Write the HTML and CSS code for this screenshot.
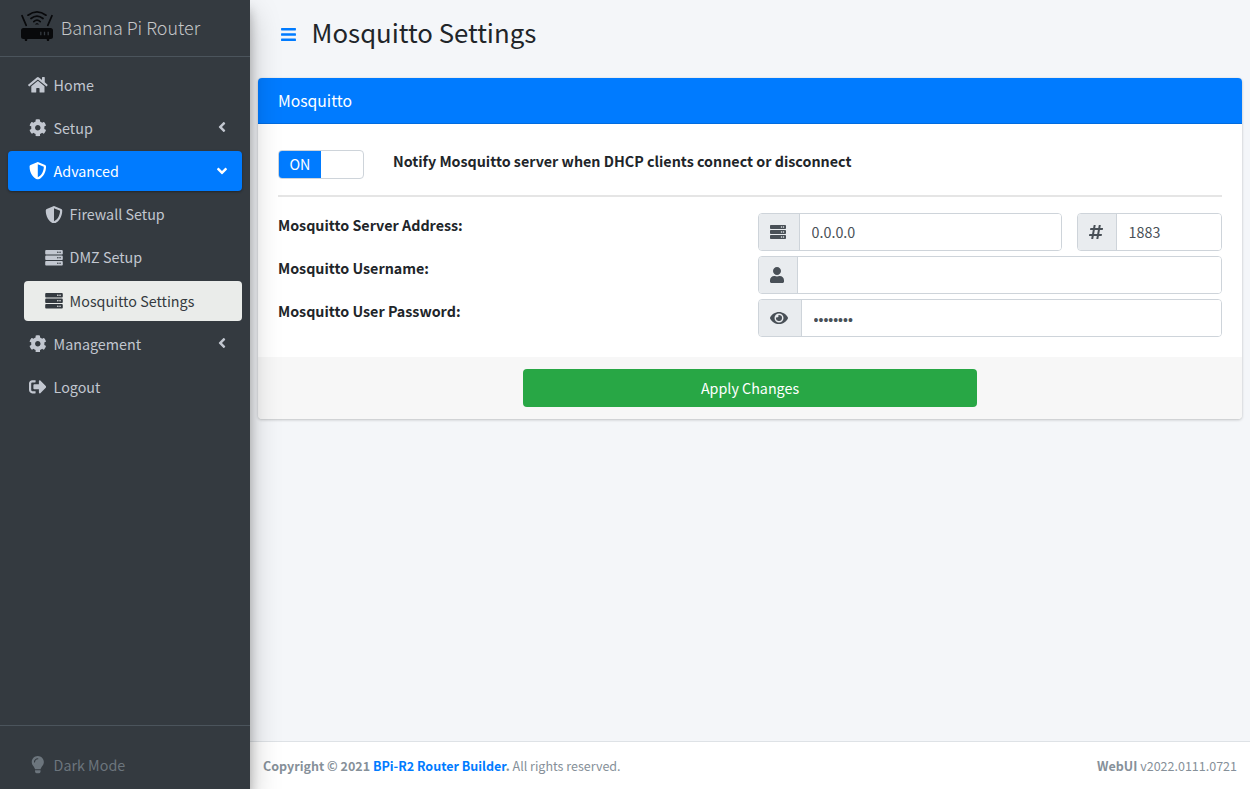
FILE: index.html
```html
<!DOCTYPE html>
<html lang="en">
<head>
<meta charset="utf-8">
<title>Mosquitto Settings</title>
<link rel="stylesheet" href="styles.css">
</head>
<body>
<svg class="defs" width="0" height="0">
  <symbol id="home" viewBox="0 0 576 512"><path d="M280.37 148.26L96 300.11V464a16 16 0 0 0 16 16l112.06-.29a16 16 0 0 0 15.92-16V368a16 16 0 0 1 16-16h64a16 16 0 0 1 16 16v95.64a16 16 0 0 0 16 16.05L464 480a16 16 0 0 0 16-16V300L295.67 148.26a12.19 12.19 0 0 0-15.3 0zM571.6 251.47L488 182.56V44.05a12 12 0 0 0-12-12h-56a12 12 0 0 0-12 12v72.61L318.47 43a48 48 0 0 0-61 0L4.34 251.47a12 12 0 0 0-1.6 16.9l25.5 31A12 12 0 0 0 45.15 301l235.22-193.74a12.19 12.19 0 0 1 15.3 0L530.9 301a12 12 0 0 0 16.9-1.6l25.5-31a12 12 0 0 0-1.7-16.93z"/></symbol>
  <symbol id="cog" viewBox="0 0 512 512"><path d="M487.4 315.7l-42.6-24.6c4.3-23.2 4.3-47 0-70.2l42.6-24.6c4.9-2.8 7.1-8.6 5.5-14-11.1-35.6-30-67.8-54.7-94.6-3.8-4.1-10-5.1-14.8-2.3L380.8 110c-17.9-15.4-38.5-27.3-60.8-35.1V25.8c0-5.6-3.9-10.5-9.4-11.7-36.7-8.2-74.3-7.8-109.2 0-5.5 1.2-9.4 6.1-9.4 11.7V75c-22.2 7.9-42.8 19.8-60.8 35.1L88.7 85.5c-4.9-2.8-11-1.9-14.8 2.3-24.7 26.7-43.6 58.9-54.7 94.6-1.7 5.4.6 11.2 5.5 14L67.3 221c-4.3 23.2-4.3 47 0 70.2l-42.6 24.6c-4.9 2.8-7.1 8.6-5.5 14 11.1 35.6 30 67.8 54.7 94.6 3.8 4.1 10 5.1 14.8 2.3l42.6-24.6c17.9 15.4 38.5 27.3 60.8 35.1v49.2c0 5.6 3.9 10.5 9.4 11.7 36.7 8.2 74.3 7.8 109.2 0 5.5-1.2 9.4-6.1 9.4-11.7v-49.2c22.2-7.9 42.8-19.8 60.8-35.1l42.6 24.6c4.9 2.8 11 1.9 14.8-2.3 24.7-26.7 43.6-58.9 54.7-94.6 1.5-5.5-.7-11.3-5.6-14.1zM256 336c-44.1 0-80-35.9-80-80s35.9-80 80-80 80 35.9 80 80-35.9 80-80 80z"/></symbol>
  <symbol id="shield" viewBox="0 0 512 512"><path d="M466.5 83.7l-192-80a48.15 48.15 0 0 0-36.9 0l-192 80C27.7 91.1 16 108.6 16 128c0 198.5 114.5 335.7 221.5 380.3 11.8 4.9 25.1 4.9 36.9 0C360.1 472.6 496 349.3 496 128c0-19.4-11.7-36.9-29.5-44.3zM256.1 446.3l-.1-381 175.9 73.3c-3.3 151.4-82.1 261.1-175.8 307.7z"/></symbol>
  <symbol id="server" viewBox="0 0 512 512"><path id="unit" d="M480 160H32c-17.673 0-32-14.327-32-32V64c0-17.673 14.327-32 32-32h448c17.673 0 32 14.327 32 32v64c0 17.673-14.327 32-32 32zm-48-88c-13.255 0-24 10.745-24 24s10.745 24 24 24 24-10.745 24-24-10.745-24-24-24zm-64 0c-13.255 0-24 10.745-24 24s10.745 24 24 24 24-10.745 24-24-10.745-24-24-24z"/><use href="#unit" y="160"/><use href="#unit" y="320"/></symbol>
  <symbol id="logout" viewBox="0 0 512 512"><path d="M497 273L329 441c-15 15-41 4.500-41-17v-96H152c-13.300 0-24-10.700-24-24v-96c0-13.300 10.700-24 24-24h136V88c0-21.400 25.900-32 41-17l168 168c9.300 9.400 9.300 24.600 0 34zM192 436v-40c0-6.600-5.400-12-12-12H96c-17.700 0-32-14.300-32-32V160c0-17.700 14.300-32 32-32h84c6.600 0 12-5.400 12-12V76c0-6.600-5.400-12-12-12H96c-53 0-96 43-96 96v192c0 53 43 96 96 96h84c6.600 0 12-5.400 12-12z"/></symbol>
  <symbol id="bulb" viewBox="0 0 352 512"><path d="M96.060 454.350c.01 6.290 1.870 12.450 5.360 17.690l17.090 25.690a31.990 31.990 0 0 0 26.640 14.280h61.710a31.990 31.990 0 0 0 26.640-14.280l17.090-25.690a31.990 31.990 0 0 0 5.360-17.690l.04-38.350H96.010l.05 38.350zM0 176c0 44.370 16.450 84.850 43.560 115.780 16.520 18.850 42.360 58.230 52.210 91.450.04.260.07.520.11.780h160.240c.04-.26.07-.51.11-.78 9.850-33.220 35.690-72.600 52.210-91.450C335.550 260.850 352 220.370 352 176 352 78.610 272.910-.3 175.450 0 73.440.31 0 82.970 0 176zm176-80c-44.110 0-80 35.890-80 80 0 8.840-7.160 16-16 16s-16-7.160-16-16c0-61.760 50.240-112 112-112 8.840 0 16 7.160 16 16s-7.160 16-16 16z"/></symbol>
  <symbol id="angle-left" viewBox="0 0 256 512"><path d="M31.700 239l136-136c9.400-9.400 24.600-9.400 33.900 0l22.600 22.600c9.400 9.400 9.400 24.600 0 33.900L127.900 256l96.400 96.400c9.400 9.400 9.400 24.600 0 33.900L201.700 409c-9.400 9.400-24.600 9.400-33.900 0l-136-136c-9.500-9.400-9.500-24.600-.1-34z"/></symbol>
  <symbol id="user" viewBox="0 0 448 512"><path d="M224 256c70.700 0 128-57.300 128-128S294.700 0 224 0 96 57.300 96 128s57.300 128 128 128zm89.600 32h-16.700c-22.200 10.200-46.900 16-72.900 16s-50.600-5.800-72.900-16h-16.700C60.200 288 0 348.200 0 422.400V464c0 26.500 21.500 48 48 48h352c26.500 0 48-21.500 48-48v-41.600c0-74.200-60.200-134.400-134.400-134.400z"/></symbol>
  <symbol id="hash" viewBox="0 0 448 512"><path d="M440.667 182.109l7.143-40c1.313-7.355-4.342-14.109-11.813-14.109h-74.810l14.623-81.891C377.123 38.754 371.468 32 363.997 32h-40.632a12 12 0 0 0-11.813 9.891L296.175 128H197.540l14.623-81.891C213.477 38.754 207.822 32 200.350 32h-40.632a12 12 0 0 0-11.813 9.891L132.528 128H53.432a12 12 0 0 0-11.813 9.891l-7.143 40C33.163 185.246 38.818 192 46.289 192h74.810L98.242 320H19.146a12 12 0 0 0-11.813 9.891l-7.143 40C-1.123 377.246 4.532 384 12.003 384h74.810L72.190 465.891C70.877 473.246 76.532 480 84.003 480h40.632a12 12 0 0 0 11.813-9.891L151.826 384h98.634l-14.623 81.891C234.523 473.246 240.178 480 247.650 480h40.632a12 12 0 0 0 11.813-9.891L315.472 384h79.096a12 12 0 0 0 11.813-9.891l7.143-40c1.313-7.355-4.342-14.109-11.813-14.109h-74.810l22.857-128h79.096a12 12 0 0 0 11.813-9.891zM261.889 320h-98.634l22.857-128h98.634l-22.857 128z"/></symbol>
  <symbol id="eye" viewBox="0 0 576 512"><path d="M572.520 241.400C518.290 135.590 410.930 64 288 64S57.680 135.640 3.480 241.410a32.350 32.350 0 0 0 0 29.190C57.710 376.410 165.070 448 288 448s230.320-71.640 284.520-177.410a32.350 32.350 0 0 0 0-29.190zM288 400a144 144 0 1 1 144-144 143.930 143.930 0 0 1-144 144zm0-240a95.310 95.310 0 0 0-25.310 3.790 47.850 47.850 0 0 1-66.900 66.900A95.780 95.780 0 1 0 288 160z"/></symbol>
  <symbol id="bars" viewBox="0 0 448 512"><path d="M16 132h416a16 16 0 0 0 16-16V76a16 16 0 0 0-16-16H16A16 16 0 0 0 0 76v40a16 16 0 0 0 16 16zm0 160h416a16 16 0 0 0 16-16v-40a16 16 0 0 0-16-16H16a16 16 0 0 0-16 16v40a16 16 0 0 0 16 16zm0 160h416a16 16 0 0 0 16-16v-40a16 16 0 0 0-16-16H16a16 16 0 0 0-16 16v40a16 16 0 0 0 16 16z"/></symbol>
</svg>

<aside class="sidebar">
  <a class="brand">
    <svg class="brand-logo" viewBox="0 0 33 33">
      <rect x="1" y="18" width="32" height="11" rx="2.500"/>
      <path d="M4.500 28h3l-.5 3h-2zM26.500 28h3l-.5 3h-2z"/>
      <g class="logo-lines">
        <path d="M2 5.700L6.200 15.300M32 5.700L27.800 15.300"/>
        <path d="M8 5.200Q17-1.600 26 5.200M11 8.500Q17 3.600 23 8.500M13.800 11.600Q17 8.800 20.200 11.600"/>
      </g>
      <path d="M14.800 14.500q2.200-3 4.400 0z"/>
      <path class="logo-leds" d="M20.800 21.800v3.400M24.500 21.800v3.400M28.200 21.800v3.400"/>
    </svg>
    <span class="brand-text">Banana Pi Router</span>
  </a>
  <nav class="menu">
    <a class="item"><svg class="icon home"><use href="#home"/></svg><span>Home</span></a>
    <a class="item"><svg class="icon"><use href="#cog"/></svg><span>Setup</span><svg class="arrow"><use href="#angle-left"/></svg></a>
    <a class="item open"><svg class="icon"><use href="#shield"/></svg><span>Advanced</span><svg class="arrow"><use href="#angle-left"/></svg></a>
    <a class="item child"><svg class="icon"><use href="#shield"/></svg><span>Firewall Setup</span></a>
    <a class="item child"><svg class="icon"><use href="#server"/></svg><span>DMZ Setup</span></a>
    <a class="item child current"><svg class="icon"><use href="#server"/></svg><span>Mosquitto Settings</span></a>
    <a class="item"><svg class="icon"><use href="#cog"/></svg><span>Management</span><svg class="arrow"><use href="#angle-left"/></svg></a>
    <a class="item"><svg class="icon"><use href="#logout"/></svg><span>Logout</span></a>
  </nav>
  <div class="mode">
    <a class="item muted"><svg class="icon"><use href="#bulb"/></svg><span>Dark Mode</span></a>
  </div>
</aside>

<div class="page">
  <header class="page-header">
    <svg class="toggle-menu"><use href="#bars"/></svg>
    <h1>Mosquitto Settings</h1>
  </header>
  <main class="content">
    <section class="card">
      <h3 class="card-header">Mosquitto</h3>
      <div class="card-body">
        <div class="notify">
          <div class="switch"><span class="switch-on">ON</span></div>
          <strong>Notify Mosquitto server when DHCP clients connect or disconnect</strong>
        </div>
        <hr>
        <div class="row">
          <label>Mosquitto Server Address:</label>
          <div class="fields">
            <div class="group address"><span class="addon"><svg class="w16"><use href="#server"/></svg></span><input type="text" value="0.0.0.0"></div>
            <div class="group port"><span class="addon"><svg class="w14"><use href="#hash"/></svg></span><input type="text" value="1883"></div>
          </div>
        </div>
        <div class="row">
          <label>Mosquitto Username:</label>
          <div class="fields"><div class="group"><span class="addon"><svg class="w14"><use href="#user"/></svg></span><input type="text"></div></div>
        </div>
        <div class="row">
          <label>Mosquitto User Password:</label>
          <div class="fields"><div class="group"><span class="addon"><svg class="w18"><use href="#eye"/></svg></span><input class="secret" type="password" value="password"></div></div>
        </div>
      </div>
      <div class="card-footer"><button>Apply Changes</button></div>
    </section>
  </main>
  <footer class="footer">
    <span><strong>Copyright © 2021 <a>BPi-R2 Router Builder</a>.</strong> All rights reserved.</span>
    <span><b>WebUI</b> v2022.0111.0721</span>
  </footer>
</div>
</body>
</html>
```

FILE: styles.css
```css
* { box-sizing: border-box; }

body {
  margin: 0;
  height: 789px;
  display: flex;
  overflow: hidden;
  background: #f4f6f9;
  color: #212529;
  font: 14.3px/24px "Noto Sans CJK SC", sans-serif;
}

svg { fill: currentColor; flex: none; }
.defs { position: absolute; }

.sidebar {
  width: 250px;
  flex: none;
  display: flex;
  flex-direction: column;
  z-index: 1;
  position: relative;
  background: #343a40;
  color: #c2c7d0;
  box-shadow: 0 14px 28px rgba(0,0,0,.25), 0 10px 10px rgba(0,0,0,.22);
}

.brand {
  height: 57px;
  padding: 0 20px;
  display: flex;
  align-items: center;
  gap: 7.700px;
  border-bottom: 1px solid #4b545c;
  color: rgba(255,255,255,.72);
}
.brand-logo { width: 33px; height: 33px; fill: #08090b; margin-bottom: 3px; }
.logo-lines { fill: none; stroke: #08090b; stroke-width: 1.700; stroke-linecap: round; }
.logo-leds { stroke: #343a40; stroke-width: 1.300; }
.brand-text { font-size: 17.900px; font-weight: 300; padding-bottom: 2px; }

.menu {
  flex: 1;
  padding: 8px 8px 0;
  display: flex;
  flex-direction: column;
  gap: 3.120px;
}
.item {
  height: 40px;
  flex: none;
  padding: 0 12px 0 20.800px;
  display: flex;
  align-items: center;
  border-radius: 4px;
}
.icon { width: 17.600px; height: 17.600px; margin-right: 7.200px; }
.icon.home { width: 19.800px; margin: 0 6.100px 0 -1.100px; }
.arrow { width: 8px; height: 16px; margin: 0 4px 2px auto; }
.open .arrow { transform: rotate(-90deg); margin-bottom: 0; }
.open {
  background: #007bff;
  color: #fff;
  box-shadow: 0 1px 3px rgba(0,0,0,.12), 0 1px 2px rgba(0,0,0,.24);
}
.child { margin-left: 16px; }
.child .icon { width: 18px; margin: 0 7px 0 -.200px; }
.current { background: #eaecea; color: #343a40; }
.mode { height: 64px; padding: 19px 8px 0; border-top: 1px solid #4b545c; }
.muted { color: #6c757d; }

.page { flex: 1; display: flex; flex-direction: column; min-width: 0; }
.page-header { height: 78px; padding: 0 30px 10px 31px; display: flex; align-items: center; gap: 15.600px; }
.toggle-menu { width: 15px; height: 17px; color: #007bff; margin-top: 1px; }
h1 { margin: 0 0 5px; font-size: 25.750px; font-weight: 400; line-height: 34px; }

.content { flex: 1; padding: 0 8px; }
.card {
  border-radius: 4px;
  background: #fff;
  overflow: hidden;
  box-shadow: 0 0 1px rgba(0,0,0,.125), 0 1px 3px rgba(0,0,0,.2);
}
.card-header {
  height: 46px;
  margin: 0;
  padding: 0 20px;
  background: #007bff;
  border-bottom: 1px solid rgba(0,0,0,.125);
  color: #fff;
  font-size: 15.700px;
  font-weight: 400;
  line-height: 46px;
}
.card-body { padding: 26px 20px 20px; }
.notify { display: flex; gap: 29px; }
.notify strong { line-height: 21px; }
.switch {
  width: 86px;
  height: 29px;
  border: 1px solid #ced4da;
  border-radius: 4px;
  overflow: hidden;
}
.switch-on { display: block; width: 42px; height: 27px; background: #007bff; color: #fff; text-align: center; line-height: 25px; }
hr { height: 2px; margin: 16px 0; border: 0; background: #e5e5e5; }
.row { display: flex; justify-content: space-between; margin-bottom: 5px; }
.row:last-child { margin-bottom: 0; }
.row label { font-weight: 700; line-height: 23px; }
.fields { width: 464px; display: flex; gap: 15px; }
.group {
  flex: 1;
  height: 38px;
  display: flex;
  border: 1px solid #ced4da;
  border-radius: 4px;
  overflow: hidden;
}
.address { flex: none; width: 304px; }
.addon {
  flex: none;
  padding: 0 12.600px 0 11.400px;
  display: flex;
  align-items: center;
  background: #e9ecef;
  border-right: 1px solid #ced4da;
  color: #495057;
}
.addon svg { height: 16px; }
.w14 { width: 14px; }
.w16 { width: 16px; }
.w18 { width: 18px; }
.group input {
  flex: 1;
  min-width: 0;
  padding: 0 12px 0 11.600px;
  border: 0;
  background: #fff;
  color: #495057;
  font: inherit;
}
.group .secret { padding-top: 3px; font: 14px "Liberation Sans", sans-serif; }
.card-footer { height: 62px; padding: 12px 0; display: flex; justify-content: center; background: #f7f7f7; }
button {
  width: 454px;
  height: 38px;
  border: 0;
  border-radius: 4px;
  background: #28a745;
  color: #fff;
  font: inherit;
}

.footer {
  height: 48px;
  padding: 0 13px;
  display: flex;
  align-items: center;
  justify-content: space-between;
  background: #fff;
  border-top: 1px solid #dee2e6;
  color: #869099;
  font-size: 12.520px;
}
.footer a { color: #007bff; }
```
